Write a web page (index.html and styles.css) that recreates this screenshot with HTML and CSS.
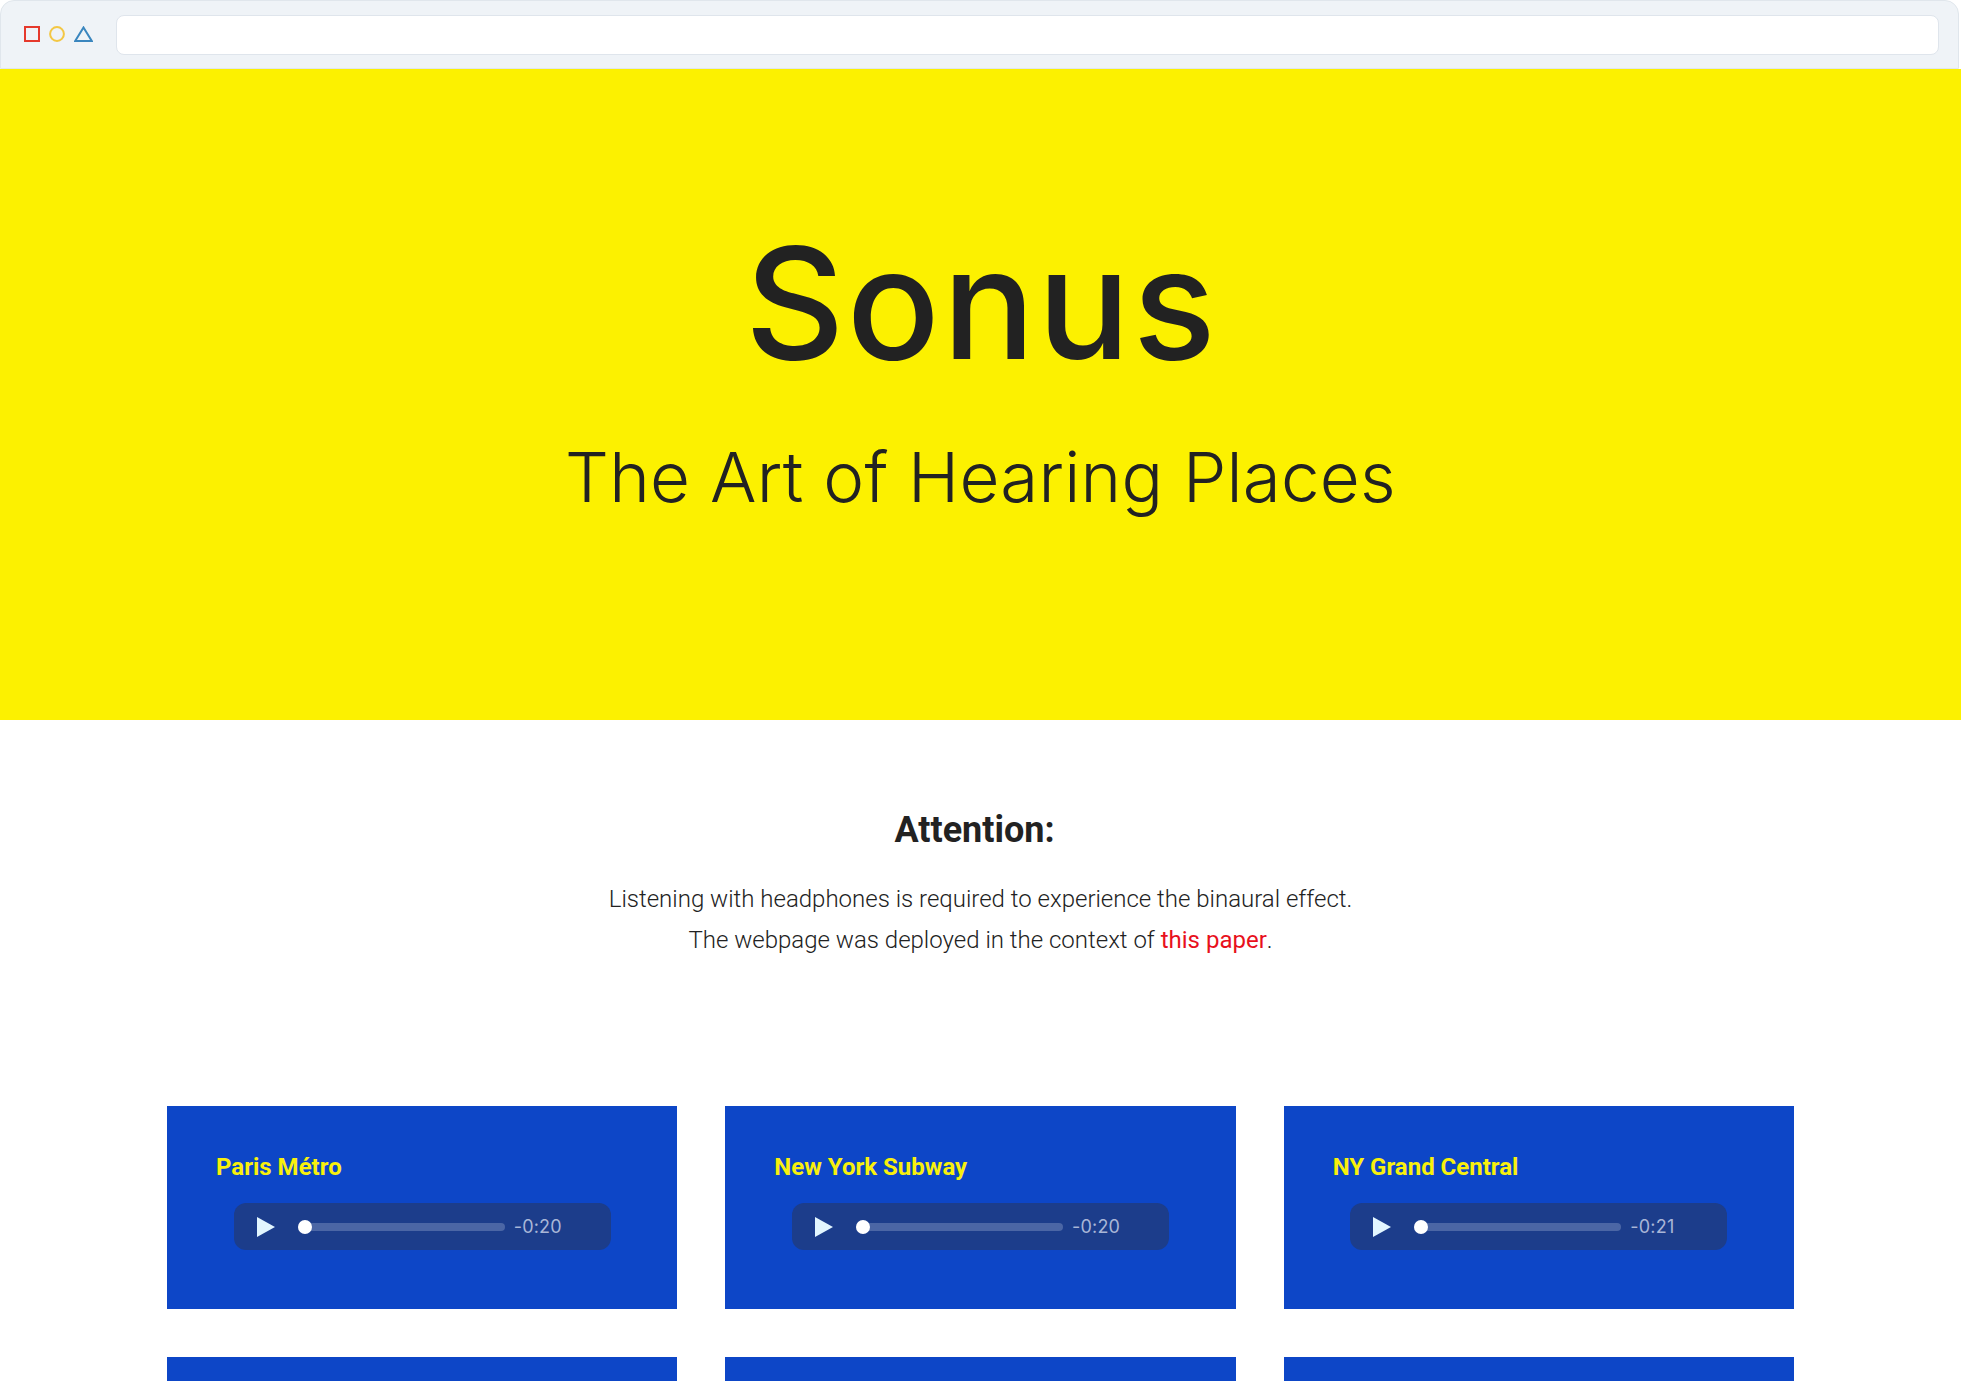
FILE: index.html
```html
<!DOCTYPE html>
<html lang="en">
<head>
<meta charset="utf-8">
<title>Sonus - The Art of Hearing Places</title>
<link rel="stylesheet" href="styles.css">
</head>
<body>
<div class="chrome">
  <div class="dots">
    <svg class="dot" width="16" height="16" viewBox="0 0 16 16"><rect x="1" y="1" width="14" height="14" fill="none" stroke="#e5392c" stroke-width="2"/></svg>
    <svg class="dot" width="16" height="16" viewBox="0 0 16 16"><circle cx="8" cy="8" r="6.9" fill="none" stroke="#f3c744" stroke-width="2"/></svg>
    <svg class="dot" width="19" height="16" viewBox="0 0 19 16"><path d="M9.5 1.5 L17.8 15 H1.2 Z" fill="none" stroke="#3a86be" stroke-width="2" stroke-linejoin="miter"/></svg>
  </div>
  <div class="address"></div>
</div>

<header class="hero">
  <h1 class="hero-title">Sonus</h1>
  <p class="hero-sub">The Art of Hearing Places</p>
</header>

<section class="intro">
  <h2 class="intro-title">Attention:</h2>
  <p class="intro-text">Listening with headphones is required to experience the binaural effect.<br>The webpage was deployed in the context of <a class="intro-link" href="#">this paper</a>.</p>
</section>

<main class="grid">
  <article class="card">
    <h3 class="card-title">Paris Métro</h3>
    <div class="player"><span class="play"></span><span class="track"><span class="knob"></span></span><span class="time">-0:20</span></div>
  </article>
  <article class="card">
    <h3 class="card-title">New York Subway</h3>
    <div class="player"><span class="play"></span><span class="track"><span class="knob"></span></span><span class="time">-0:20</span></div>
  </article>
  <article class="card">
    <h3 class="card-title">NY Grand Central</h3>
    <div class="player"><span class="play"></span><span class="track"><span class="knob"></span></span><span class="time">-0:21</span></div>
  </article>
  <article class="card">
    <h3 class="card-title">London Underground</h3>
    <div class="player"><span class="play"></span><span class="track"><span class="knob"></span></span><span class="time">-0:20</span></div>
  </article>
  <article class="card">
    <h3 class="card-title">Tokyo Station</h3>
    <div class="player"><span class="play"></span><span class="track"><span class="knob"></span></span><span class="time">-0:20</span></div>
  </article>
  <article class="card">
    <h3 class="card-title">Berlin U-Bahn</h3>
    <div class="player"><span class="play"></span><span class="track"><span class="knob"></span></span><span class="time">-0:20</span></div>
  </article>
</main>
</body>
</html>
```

FILE: styles.css
```css
* { box-sizing: border-box; }

html, body {
  margin: 0;
  padding: 0;
  background: #ffffff;
}

body {
  font-family: Roboto, "Liberation Sans", sans-serif;
  color: #222222;
  overflow: hidden;
}

/* Browser chrome */
.chrome {
  height: 69px;
  margin-right: 2px;
  background: #eff3f7;
  border: 1px solid #e0e6ec;
  border-radius: 14px 14px 0 0;
  display: flex;
  align-items: flex-start;
  padding: 0 19px 0 23px;
}

.dots {
  display: flex;
  align-items: center;
  gap: 9px;
  margin-top: 25px;
}

.dot { display: block; }

.address {
  flex: 1;
  height: 40px;
  margin-top: 14px;
  margin-left: 23px;
  background: #ffffff;
  border: 1px solid #dfe5ec;
  border-radius: 8px;
}

/* Hero */
.hero {
  height: 651px;
  background: #fcf100;
  display: flex;
  flex-direction: column;
  align-items: center;
  padding-top: 157px;
}

.hero-title {
  margin: 0;
  padding-left: 2px;
  font-family: Inter, "Noto Sans", sans-serif;
  font-weight: 500;
  font-size: 154px;
  line-height: 1;
  letter-spacing: 2.5px;
  color: #222222;
}

.hero-sub {
  margin: 63px 0 0;
  font-family: Inter, "Noto Sans", sans-serif;
  font-weight: 300;
  font-size: 69px;
  line-height: 1;
  letter-spacing: 0.25px;
  color: #222222;
}

/* Intro */
.intro {
  text-align: center;
  padding-top: 89px;
}

.intro-title {
  margin: 0;
  padding-right: 12px;
  font-size: 36px;
  font-weight: 700;
  line-height: 43px;
  color: #222222;
}

.intro-text {
  margin: 27px 0 0;
  font-size: 24px;
  font-weight: 300;
  line-height: 41px;
  color: #222222;
}

.intro-link {
  color: #e8101c;
  font-weight: 400;
  text-decoration: none;
}

/* Cards */
.grid {
  width: 1627px;
  margin: 145px auto 0;
  display: grid;
  grid-template-columns: repeat(3, 1fr);
  column-gap: 48px;
  row-gap: 48px;
}

.card {
  height: 203px;
  background: #0d46c7;
  padding: 47px 49px 0;
  display: flex;
  flex-direction: column;
}

.card-title {
  margin: 0;
  font-size: 24px;
  font-weight: 700;
  line-height: 28px;
  color: #f8f00c;
}

.player {
  align-self: center;
  margin-top: 22px;
  width: 377px;
  height: 47px;
  border-radius: 12px;
  background: #1c3d8b;
  display: flex;
  align-items: center;
  padding-left: 23px;
}

.play {
  width: 0;
  height: 0;
  border-top: 10px solid transparent;
  border-bottom: 10px solid transparent;
  border-left: 18px solid #e2f6ff;
  margin-right: 23px;
}

.track {
  position: relative;
  width: 207px;
  height: 8px;
  border-radius: 4px;
  background: #4b66a5;
  margin-right: 9px;
}

.knob {
  position: absolute;
  left: 0;
  top: -3px;
  width: 14px;
  height: 14px;
  border-radius: 50%;
  background: #ffffff;
}

.time {
  font-family: Inter, "Noto Sans", sans-serif;
  font-size: 18px;
  color: #a9b6d7;
  letter-spacing: 0.2px;
}
```
